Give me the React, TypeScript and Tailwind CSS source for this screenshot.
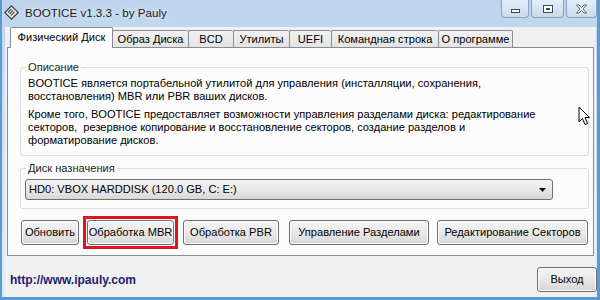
import { useState } from 'react'

const tabs = ['Физический Диск', 'Образ Диска', 'BCD', 'Утилиты', 'UEFI', 'Командная строка', 'О программе']
const tabWidths = ['w-[103px]', 'w-[76px]', 'w-[45px]', 'w-[56px]', 'w-[42px]', 'w-[107px]', 'w-[75px]']

const btn =
  'h-[25px] whitespace-nowrap rounded-[3px] border border-[#707070] bg-gradient-to-b from-[#f4f4f4] via-[#e9e9e9] to-[#d6d6d6] text-[11.1px] text-black shadow-[inset_0_0_0_1px_#fcfcfc] flex items-center justify-center'

function WinIcon() {
  return (
    <svg width="15" height="15" viewBox="0 0 15 15">
      <path d="M7.5 0.8 L14.2 7.5 L7.5 14.2 L0.8 7.5 Z" fill="#e8e8e8" stroke="#3a3a3a" strokeWidth="1.2" />
      <path d="M4 7.5 L7.5 4 M5.5 9 L9 5.5 M7 10.5 L10.5 7" stroke="#555" strokeWidth="1.1" />
    </svg>
  )
}

function Cursor() {
  return (
    <svg width="13" height="20" viewBox="0 0 13 20" className="absolute left-[576px] top-[106px]">
      <path d="M1 1 L1 16 L4.5 12.5 L7 18.5 L9.5 17.5 L7 11.5 L11.5 11.5 Z" fill="#fff" stroke="#000" strokeWidth="1" strokeLinejoin="round" />
    </svg>
  )
}

export default function App() {
  const [active, setActive] = useState(0)

  return (
    <div className="relative w-[600px] h-[300px] overflow-hidden flex flex-col bg-gradient-to-b from-[#bdd4ec] via-[#d3e3f3] to-[#dfeaf6] border-l-2 border-r-[3px] border-b-[3px] border-[#5a9bd2] font-['Liberation_Sans',Arial,sans-serif]">
      {/* Title bar */}
      <div className="h-[27px] flex items-start shrink-0">
        <div className="flex items-center gap-[6px] pl-[2px] pt-[4px]">
          <WinIcon />
          <span className="text-[11.6px] text-[#1b1b1b] [text-shadow:0_0_6px_#ffffff]">BOOTICE v1.3.3 - by Pauly</span>
        </div>
        <div className="ml-auto flex gap-[2px]">
          <div className="w-[28px] h-[18px] rounded-b-[4px] border border-t-0 border-[#8aa3c0] bg-gradient-to-b from-[#e4eef9] to-[#c9dbee] flex items-center justify-center">
            <div className="w-[9px] h-[4px] border border-[#3c4a5c] bg-white mt-[4px]" />
          </div>
          <div className="w-[33px] h-[18px] rounded-b-[4px] border border-t-0 border-[#8aa3c0] bg-gradient-to-b from-[#e4eef9] to-[#c9dbee] flex items-center justify-center">
            <div className="w-[10px] h-[8px] border border-[#3c4a5c] bg-white flex items-center justify-center">
              <div className="w-[4px] h-[2px] border border-[#3c4a5c]" />
            </div>
          </div>
          <div className="w-[31px] h-[18px] rounded-b-[4px] border border-t-0 border-[#8aa3c0] bg-gradient-to-b from-[#e4eef9] to-[#c9dbee] flex items-center justify-center">
            <svg width="13" height="10" viewBox="0 0 13 10">
              <path d="M1.5 1 L4 1 L6.5 3.5 L9 1 L11.5 1 L8 5 L11.5 9 L9 9 L6.5 6.5 L4 9 L1.5 9 L5 5 Z" fill="#fff" stroke="#4a5564" strokeWidth="0.9" strokeLinejoin="round" />
            </svg>
          </div>
        </div>
      </div>

      {/* Client area */}
      <div className="flex-1 ml-[3px] mr-[1px] bg-[#f0f0f0] flex flex-col text-[11.1px] text-black">
        {/* Tabs */}
        <div className="h-[20px] flex items-end pl-[6px] relative z-10">
          {tabs.map((t, i) =>
            i === active ? (
              <div
                key={t}
                onClick={() => setActive(i)}
                className={`${tabWidths[i]} h-[21px] -mb-[1px] -mx-[1px] border border-b-0 border-[#898c95] bg-white flex items-center justify-center pb-[1px] rounded-t-[2px] whitespace-nowrap`}
              >
                {t}
              </div>
            ) : (
              <div
                key={t}
                onClick={() => setActive(i)}
                className={`${tabWidths[i]} h-[17px] border border-b-0 border-r-0 last:border-r border-[#898c95] bg-gradient-to-b from-[#f2f2f2] to-[#e3e3e3] flex items-center justify-center rounded-t-[2px] whitespace-nowrap`}
              >
                {t}
              </div>
            )
          )}
        </div>

        {/* Panel */}
        <div className="h-[209px] ml-[2px] mr-[2px] border border-[#898c95] bg-[#fcfcfc] flex flex-col pl-[12px] pr-[4px]">
          <div className="relative mt-[19px] h-[89px] border border-[#d5dfe5] rounded-[3px] pl-[7px] pt-[9px]">
            <span className="absolute -top-[8px] left-[5px] px-[2px] bg-[#fcfcfc] text-[#1e1e1e] leading-[14px]">Описание</span>
            <p className="leading-[13px] whitespace-nowrap">
              BOOTICE является портабельной утилитой для управления (инсталляции, сохранения,
              <br />
              восстановления) MBR или PBR ваших дисков.
            </p>
            <p className="leading-[13px] mt-[5px] whitespace-nowrap">
              Кроме того, BOOTICE предоставляет возможности управления разделами диска: редактирование
              <br />
              секторов,&nbsp; резервное копирование и восстановление секторов, создание разделов и
              <br />
              форматирование дисков.
            </p>
          </div>

          <div className="relative mt-[12px] h-[41px] border border-[#d5dfe5] rounded-[3px] pl-[4px] pt-[10px]">
            <span className="absolute -top-[8px] left-[5px] px-[2px] bg-[#fcfcfc] text-[#1e1e1e] leading-[14px]">Диск назначения</span>
            <div className="w-[528px] h-[21px] rounded-[3px] border border-[#707070] bg-gradient-to-b from-[#f3f3f3] via-[#e9e9e9] to-[#d8d8d8] flex items-center pl-[3px] pr-[6px]">
              <span>HD0: VBOX HARDDISK (120.0 GB, C: E:)</span>
              <svg width="7" height="4" viewBox="0 0 7 4" className="ml-auto">
                <path d="M0 0 L7 0 L3.5 4 Z" fill="#000" />
              </svg>
            </div>
          </div>

          <div className="mt-[7px] flex items-center">
            <button className={`${btn} w-[58px] ml-[1px]`}>Обновить</button>
            <div className="ml-[4px] border-[3px] border-[#e0141e] p-[1px]">
              <button className={`${btn} w-[87px] h-[23px]`}>Обработка MBR</button>
            </div>
            <button className={`${btn} w-[96px] ml-[5px]`}>Обработка PBR</button>
            <button className={`${btn} w-[140px] ml-[10px]`}>Управление Разделами</button>
            <button className={`${btn} w-[151px] ml-[8px]`}>Редактирование Секторов</button>
          </div>
        </div>

        {/* Footer */}
        <div className="flex items-center justify-between mt-[11px] pl-[5px]">
          <span className="font-bold text-[#1c1c6e] text-[12px]">http://www.ipauly.com</span>
          <button className={`${btn} w-[60px] h-[23px] -mr-[1px]`}>Выход</button>
        </div>
      </div>

      <Cursor />
    </div>
  )
}
